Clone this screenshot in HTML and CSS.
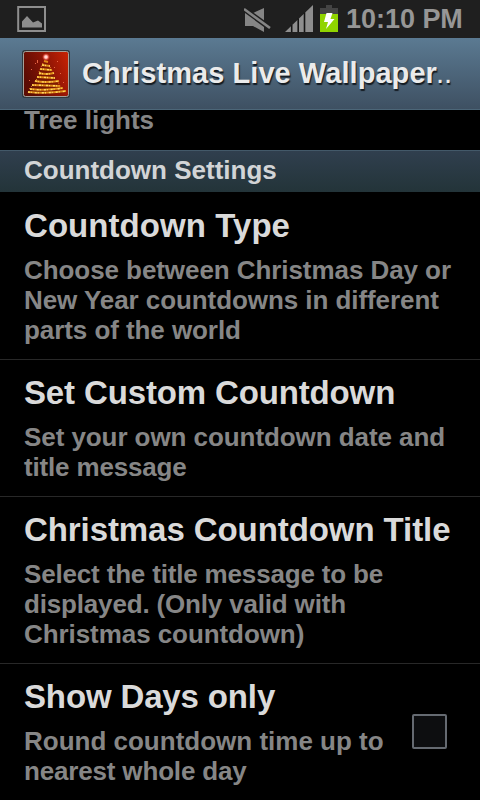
FILE: index.html
```html
<!DOCTYPE html>
<html lang="en">
<head>
<meta charset="utf-8">
<title>Christmas Live Wallpaper</title>
<link rel="stylesheet" href="styles.css">
</head>
<body>
<div class="screen">
  <div class="status">
    <svg class="picture" width="30" height="28" viewBox="0 0 30 28"><path d="M1.2 1H28v24H1.2z" fill="none" stroke="#8e8e8e" stroke-width="2"/><path d="M5 21.5v-6l5-5.5 6 6.5 5-2 4 3v4z" fill="#8e8e8e"/></svg>
    <svg class="mute" width="28" height="26" viewBox="0 0 28 26"><path d="M1 6h8L20 1v24l-11-6H1z" fill="#858585"/><path d="M0 2l26 19" stroke="#1f1f1f" stroke-width="5.4"/><path d="M0 2l26 19" stroke="#858585" stroke-width="2.6"/></svg>
    <svg class="signal" width="28" height="27" viewBox="0 0 28 27"><path d="M0 27L28 0v27z" fill="#8e8e8e"/><path d="M6.7 20v7M13.2 13.5v13.5M19.5 7.5v19.5" stroke="#151515" stroke-width="1.6"/></svg>
    <svg class="battery" width="18" height="27" viewBox="0 0 18 27"><path d="M0 3h6V0h6v3h6v24H0z" fill="#444"/><path d="M0 9h18v18H0z" fill="#90d400"/><path d="M6.5 8h6l-2 6h4L6 24l2-7H4z" fill="#fff"/></svg>
    <span class="clock">10:10 PM</span>
  </div>
  <header class="bar">
    <svg class="app-icon" width="48" height="48" viewBox="0 0 48 48">
      <defs><linearGradient id="red" x1="0" y1=".4" x2="1" y2="0"><stop offset="0" stop-color="#5c0c04"/><stop offset=".5" stop-color="#8f1505"/><stop offset="1" stop-color="#cc2404"/></linearGradient>
      <radialGradient id="star"><stop offset="0" stop-color="#fff"/><stop offset=".4" stop-color="#ffaaa0"/><stop offset="1" stop-color="#f43020" stop-opacity="0"/></radialGradient></defs>
      <rect x="1" y="1" width="46" height="46" rx="2" fill="url(#red)" stroke="#30383e" stroke-width="2"/>
      <rect x="1.5" y="1.5" width="45" height="45" rx="2" fill="none" stroke="#a6a098"/>
      <path d="M24 11L41 43H7z" fill="#6e1c03" opacity=".5"/>
      <g fill="none" stroke="#e08a18" stroke-width="2"><path d="M22 11l4 1M20 15l8 1M18 19l12 1M17 23q7 2 15 0M15 27l18 1M13 31q10 2 24 0M10 35l28 1M8 39q14 2 33-1M6 42q17 2 38-1"/></g>
      <g fill="none" stroke="#ffd860" stroke-width="1.4" stroke-dasharray="2 1 1 3"><path d="M20 15l8 1M18 19l12 1M17 23q7 2 15 0M15 27l18 1M13 31q10 2 24 0M10 35l28 1M8 39q14 2 33-1M6 42q17 2 38-1"/></g>
      <path d="M21 13l-4 9M18 24l-5 8M12 34l-5 5M28 17l4 8M35 30l4 8" fill="none" stroke="#e99a20" stroke-dasharray="1 2"/>
      <path d="M13 13h1v1h-1zM15 10h1v3h-1zM9 19h1v1H9zM35 11h1v1h-1zM38 23h1v1h-1zM7 30h1v1H7zM41 32h1v1h-1zM32 17h1v1h-1z" fill="#e46545"/>
      <circle cx="24" cy="7" r="4" fill="url(#star)"/>
    </svg>
    <h1>Christmas Live Wallpaper<span class="dots">..</span></h1>
  </header>
  <main>
    <div class="previous"><p>Tree lights</p></div>
    <h2>Countdown Settings</h2>
    <section class="row"><h3 class="wide">Countdown Type</h3><p>Choose between Christmas Day or<br>New Year countdowns in different<br>parts of the world</p></section>
    <section class="row"><h3>Set Custom Countdown</h3><p>Set your own countdown date and<br><span class="tight">title message</span></p></section>
    <section class="row"><h3 class="long">Christmas Countdown Title</h3><p><span class="tight">Select the title message to be<br>displayed. (Only valid with</span><br>Christmas countdown)</p></section>
    <section class="row check-row"><div><h3>Show Days only</h3><p><span class="loose">Round countdown time up to</span><br><span class="tight">nearest whole day</span></p></div><span class="checkbox"></span></section>
  </main>
</div>
</body>
</html>
```
FILE: styles.css
```css
* { box-sizing: border-box; margin: 0; }
body { background: #000; font-family: "Liberation Sans", Arial, sans-serif; font-weight: bold; }
.screen { width: 480px; height: 800px; overflow: hidden; display: flex; flex-direction: column; background: #000; white-space: nowrap; }
.status { height: 38px; flex: none; display: flex; align-items: flex-start; background: #1f1f1f; padding: 5px 0 0 17px; }
.status svg { flex: none; }
.picture { margin-top: 1px; }
.mute { margin: 2px 0 0 197px; }
.signal { margin-left: 13px; }
.battery { margin-left: 7px; }
.clock { margin-left: 8px; font-size: 27px; line-height: 28px; color: #969696; letter-spacing: -.03px; }
.bar { height: 72px; flex: none; display: flex; align-items: center; padding-left: 22px; background: linear-gradient(#5b7a92, #3e5062); border-bottom: 1px solid #4c6678; }
.app-icon { flex: none; }
h1 { margin: -1px 0 0 12px; font-size: 29px; line-height: 36px; color: #ebebeb; text-shadow: 1px 2px 1px #141b22; letter-spacing: .06px; }
.dots { font-weight: normal; margin-left: -1px; }
main { flex: 1; min-height: 0; overflow: hidden; }
.previous { height: 40px; padding-left: 24px; }
.previous p { line-height: 20px; letter-spacing: 0; }
p { font-size: 26px; line-height: 30px; color: #868686; letter-spacing: -.07px; }
.tight { letter-spacing: -.17px; }
.loose { letter-spacing: 0; }
h2 { height: 42px; margin-bottom: 1px; padding-left: 24px; font-size: 26px; line-height: 38px; color: #d2d4d6; background: linear-gradient(#303f4e, #233439); border-top: 1px solid #435969; }
.row { padding: 13px 0 14px 24px; border-bottom: 1px solid #282828; }
h3 { margin-bottom: 9px; font-size: 33px; line-height: 40px; color: #dadada; letter-spacing: -.14px; }
.wide { letter-spacing: .06px; }
.long { letter-spacing: -.08px; }
.check-row { display: flex; align-items: center; justify-content: space-between; padding-right: 33px; }
.checkbox { width: 35px; height: 35px; border: 2px solid #656a71; border-radius: 2px; background: #0d0e10; }
```
